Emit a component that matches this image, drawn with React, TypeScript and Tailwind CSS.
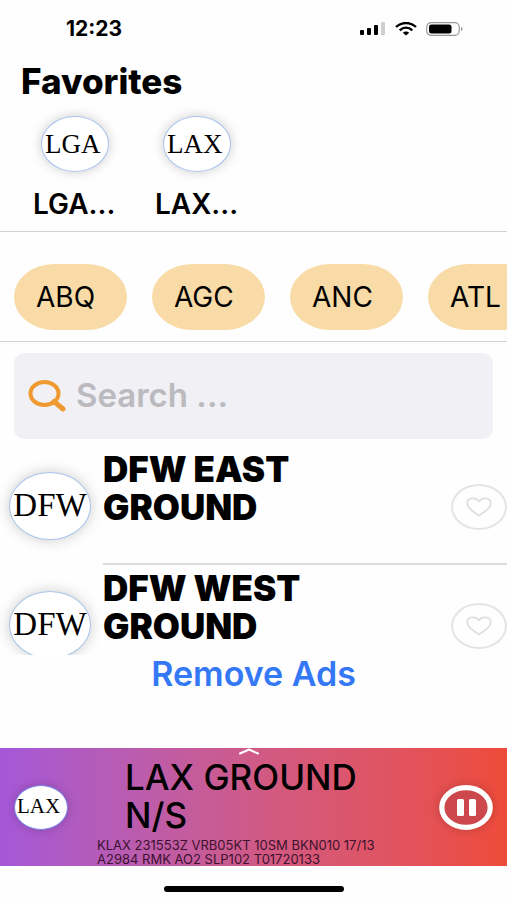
import React from 'react';

const favorites = ['LGA', 'LAX'];
const airports = ['ABQ', 'AGC', 'ANC', 'ATL'];
const stations = [
  { code: 'DFW', name: 'DFW EAST GROUND' },
  { code: 'DFW', name: 'DFW WEST GROUND' },
];

const StatusBar = () => (
  <div className="flex h-[58px] shrink-0 items-center justify-between pl-[66px] pr-11">
    <span className="text-[21px] font-bold leading-6">12:23</span>
    <div className="flex items-center gap-[9px]">
      <svg width="26" height="14" viewBox="0 0 26 14" aria-hidden="true">
        <rect x="0" y="8" width="4" height="5" rx="1" />
        <rect x="7" y="6" width="4" height="7" rx="1" />
        <rect x="14" y="3" width="4" height="10" rx="1" />
        <rect x="21" y="0" width="4" height="13" rx="1" fill="#cfcfcf" />
      </svg>
      <svg width="22" height="14" viewBox="0 0 22 14" fill="none" aria-hidden="true">
        <path d="M1 5C6.500-.3 15.500-.3 21 5" stroke="#000" strokeWidth="2.400" />
        <path d="M4.700 8.300C8.500 4.900 13.500 4.900 17.300 8.300" stroke="#000" strokeWidth="2.300" />
        <path d="M7.800 10.700C9.700 9.100 12.300 9.100 14.200 10.700L11 13.500Z" fill="#000" />
      </svg>
      <svg width="37" height="14" viewBox="0 0 37 14" fill="none" aria-hidden="true">
        <rect x=".7" y=".7" width="32.600" height="12.600" rx="4.500" stroke="#999" strokeWidth="1.200" />
        <rect x="3" y="2.500" width="22.500" height="9" rx="2.500" fill="#000" />
        <path d="M35 5C37 5.500 37 8.500 35 9Z" fill="#999" />
      </svg>
    </div>
  </div>
);

const SearchIcon = () => (
  <svg width="38" height="32" viewBox="0 0 38 32" fill="none" stroke="#ee9a30" aria-hidden="true">
    <ellipse cx="16.500" cy="13.500" rx="14" ry="11.500" strokeWidth="4" />
    <path d="M26 21.500L35 29" strokeWidth="5" strokeLinecap="round" />
  </svg>
);

const HeartIcon = () => (
  <svg width="26" height="20" viewBox="0 0 26 20" fill="none" stroke="#dedfde" strokeWidth="1.800" aria-hidden="true">
    <path
      d="M13 18.500C9 16 1.200 11.500 1.200 6.300C1.200 1 9.500-.6 13 4.400C16.500-.6 24.800 1 24.800 6.300C24.800 11.500 17 16 13 18.500Z"
      strokeLinejoin="round"
    />
  </svg>
);

const App = () => {
  return (
    <div className="flex h-screen flex-col overflow-hidden bg-[#fefefe] font-['Inter','Liberation_Sans',sans-serif] text-black">
      <StatusBar />

      <section className="shrink-0 border-b border-[#d2d2d2] pb-[13px]">
        <h1 className="pl-[21px] text-[35px] font-extrabold leading-[46px]">Favorites</h1>
        <div className="flex gap-[38px] pl-[33px] pt-3">
          {favorites.map((code) => (
            <button key={code} type="button" className="flex w-[84px] flex-col items-start">
              <span className="ml-2 flex h-14 w-[68px] items-center rounded-[50%] border border-[#a9c4ec] bg-white pl-[3px] font-['Liberation_Serif',serif] text-[27px] shadow-[0_0_12px_rgba(0,0,0,0.2)]">
                {code}
              </span>
              <span className="mt-[18px] text-[28px] font-semibold leading-7">{code}...</span>
            </button>
          ))}
        </div>
      </section>

      <nav className="flex shrink-0 gap-[25px] overflow-hidden border-b border-[#d2d2d2] pb-[11px] pl-[14px] pt-8">
        {airports.map((code) => (
          <button
            key={code}
            type="button"
            className="h-[66px] w-[113px] shrink-0 rounded-[40px/33px] bg-[#f8dba6] pl-[22px] text-left text-[28px]"
          >
            {code}
          </button>
        ))}
      </nav>

      <label className="mx-[14px] mt-[11px] flex h-[86px] shrink-0 items-center gap-[10px] rounded-[10px] bg-[#f0f0f5] pl-[14px]">
        <SearchIcon />
        <input
          type="text"
          aria-label="Search"
          placeholder="Search ..."
          className="min-w-0 flex-1 bg-transparent text-[33px] font-semibold outline-none placeholder:text-[#bababf]"
        />
      </label>

      <ul className="mt-[7px] min-h-0 flex-1 overflow-hidden">
        {stations.map(({ code, name }) => (
          <li key={name} className="flex h-[119px] items-stretch pl-[9px]">
            <span className="flex h-[68px] w-[82px] shrink-0 items-center justify-center self-center rounded-[50%] border border-[#a9c4ec] bg-white font-['Liberation_Serif',serif] text-[33px] shadow-[0_0_14px_rgba(0,0,0,0.2)]">
              {code}
            </span>
            <div className="ml-3 flex flex-1 items-start justify-between border-b-2 border-[#dcdcdc] pt-1">
              <h2 className="w-[230px] text-[35px] font-black leading-[38px]">{name}</h2>
              <button
                type="button"
                aria-label={`Add ${name} to favorites`}
                className="flex h-[46px] w-14 items-center justify-center self-center rounded-[50%] border-2 border-[#e3e4e3]"
              >
                <HeartIcon />
              </button>
            </div>
          </li>
        ))}
      </ul>

      <div className="flex h-[93px] shrink-0 items-start justify-center">
        <button type="button" className="text-[34px] font-semibold leading-[38px] text-[#3478f6]">
          Remove Ads
        </button>
      </div>

      <footer className="relative flex h-[118px] shrink-0 items-center justify-between bg-linear-to-r from-[#a557d8] via-[#d3597e] via-55% to-[#ee4b39] pl-[14px] pr-[14px]">
        <svg className="absolute left-1/2 top-0 -ml-[15px]" width="20" height="7" viewBox="0 0 20 7" fill="none" aria-hidden="true">
          <path d="M1 5.500L10 1.500L19 5.500" stroke="#fff" strokeWidth="2" strokeLinecap="round" strokeLinejoin="round" />
        </svg>
        <span className="flex h-[45px] w-[54px] shrink-0 items-center rounded-[50%] border border-[#7b83ea] bg-white pl-[2px] font-['Liberation_Serif',serif] text-[21px] shadow-[0_0_10px_rgba(0,0,0,0.2)]">
          LAX
        </span>
        <div className="ml-[29px] flex-1 self-start pt-[10px]">
          <h2 className="w-[270px] pl-7 text-[35px] font-medium leading-[38px]">LAX GROUND N/S</h2>
          <p className="w-[310px] pt-1 text-[13px] leading-[14px] text-[#3c1230]">
            KLAX 231553Z VRB05KT 10SM BKN010 17/13 A2984 RMK AO2 SLP102 T01720133
          </p>
        </div>
        <button type="button" aria-label="Pause" className="shrink-0 rounded-[50%] shadow-[0_0_10px_rgba(0,0,0,0.2)]">
          <svg width="54" height="45" viewBox="0 0 54 45" fill="none" aria-hidden="true">
            <ellipse cx="27" cy="22.500" rx="24.200" ry="19.900" fill="#cc484c" stroke="#fff" strokeWidth="5.200" />
            <rect x="18" y="14" width="7" height="17" rx="1.500" fill="#fff" />
            <rect x="30" y="14" width="7" height="17" rx="1.500" fill="#fff" />
          </svg>
        </button>
      </footer>

      <div className="flex h-[34px] shrink-0 items-end justify-center pb-2">
        <div className="h-[6px] w-[180px] rounded-full bg-black" />
      </div>
    </div>
  );
};

export default App;
